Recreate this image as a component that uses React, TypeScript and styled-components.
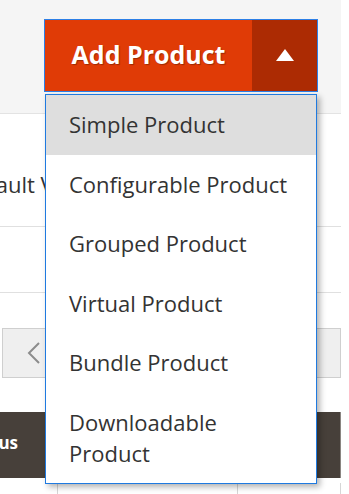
import styled, { createGlobalStyle } from "styled-components";

const GlobalStyle = createGlobalStyle`
    body {
        margin: 0;
        background: #ffffff;
        font-family: "Open Sans", "Liberation Sans", sans-serif;
    }
`;

const Page = styled.div`
    width: 341px;
    height: 494px;
    overflow: hidden;
    background: #ffffff;
`;

const Header = styled.div`
    height: 114px;
    box-sizing: border-box;
    padding: 19px 0 0 44px;
    background: #f5f5f5;
    border-bottom: 1px solid #e3e3e3;
`;

const ActionWrap = styled.div`
    position: relative;
    display: inline-flex;
    z-index: 2;
`;

const ButtonGroup = styled.div`
    display: flex;
    border: 1px solid #2d7fe6;
`;

const MainButton = styled.button`
    width: 207px;
    height: 71px;
    border: none;
    background: #e03b06;
    color: #ffffff;
    font: 700 25px "Open Sans", sans-serif;
    text-shadow: 1px 1px 1px rgba(0, 0, 0, 0.3);
    cursor: pointer;
    padding: 0 0 4px;
`;

const SplitButton = styled.button`
    width: 65px;
    height: 71px;
    border: none;
    background: #ac2b03;
    display: flex;
    align-items: center;
    justify-content: center;
    cursor: pointer;
    padding: 0 0 2px;
`;

const Menu = styled.ul`
    position: absolute;
    top: calc(100% + 2px);
    left: 1px;
    width: 272px;
    box-sizing: border-box;
    margin: 0;
    padding: 0;
    list-style: none;
    background: #ffffff;
    border: 1px solid #1f7ae0;
    box-shadow: 3px 3px 6px rgba(0, 0, 0, 0.3);
`;

const MenuItem = styled.li<{ $active?: boolean }>`
    padding: 14px 24px 14.5px 23px;
    font-size: 22px;
    line-height: 31px;
    color: #333333;
    background: ${({ $active }) => ($active ? "#dedede" : "transparent")};
`;

const FilterRow = styled.div`
    height: 113px;
    box-sizing: border-box;
    padding-top: 55px;
    border-bottom: 1px solid #e0e0e0;
`;

const ViewClip = styled.div`
    width: 45px;
    overflow: hidden;
    font-size: 22px;
    line-height: 31px;
    color: #333333;
    white-space: nowrap;
`;

const ViewLabel = styled.span`
    margin-left: -40px;
`;

const EmptyRow = styled.div`
    height: 65px;
    border-bottom: 1px solid #e0e0e0;
`;

const Pager = styled.div`
    margin: 35px 0 0 2px;
    height: 50px;
    box-sizing: border-box;
    border: 1px solid #cfcfcf;
    background: #efefef;
    display: flex;
    align-items: center;
    padding-left: 24px;
`;

const GridHead = styled.div`
    margin-top: 34px;
    height: 66px;
    box-sizing: border-box;
    background: #47403a;
    border-right: 1px solid #8a8581;
    display: flex;
    align-items: center;
    padding-bottom: 5px;
    color: #ffffff;
    font-size: 17px;
    font-weight: 700;
    white-space: nowrap;
`;

const HeadLabel = styled.span`
    margin-left: -36px;
`;

const GridRow = styled.div`
    display: grid;
    grid-template-columns: 58px 180px 1fr;
    height: 40px;
`;

const GridCell = styled.div`
    border-right: 1px solid #d6d6d6;
    margin-top: 5px;
`;

const items = [
    "Simple Product",
    "Configurable Product",
    "Grouped Product",
    "Virtual Product",
    "Bundle Product",
    "Downloadable Product",
];

export default function App() {
    return (
        <>
            <GlobalStyle />
            <Page>
                <Header>
                    <ActionWrap>
                        <ButtonGroup>
                            <MainButton>Add Product</MainButton>
                            <SplitButton>
                                <svg width="18" height="12" viewBox="0 0 18 12">
                                    <polygon points="9,0 18,12 0,12" fill="#ffffff" />
                                </svg>
                            </SplitButton>
                        </ButtonGroup>
                        <Menu>
                            {items.map((item, i) => (
                                <MenuItem key={item} $active={i === 0}>
                                    {item}
                                </MenuItem>
                            ))}
                        </Menu>
                    </ActionWrap>
                </Header>
                <FilterRow>
                    <ViewClip>
                        <ViewLabel>Default View</ViewLabel>
                    </ViewClip>
                </FilterRow>
                <EmptyRow />
                <Pager>
                    <svg width="14" height="22" viewBox="0 0 14 22">
                        <polyline points="12,1 2,11 12,21" fill="none" stroke="#8c8c8c" strokeWidth="2" />
                    </svg>
                </Pager>
                <GridHead>
                    <HeadLabel>Status</HeadLabel>
                </GridHead>
                <GridRow>
                    <GridCell />
                    <GridCell />
                    <GridCell />
                </GridRow>
            </Page>
        </>
    );
}
